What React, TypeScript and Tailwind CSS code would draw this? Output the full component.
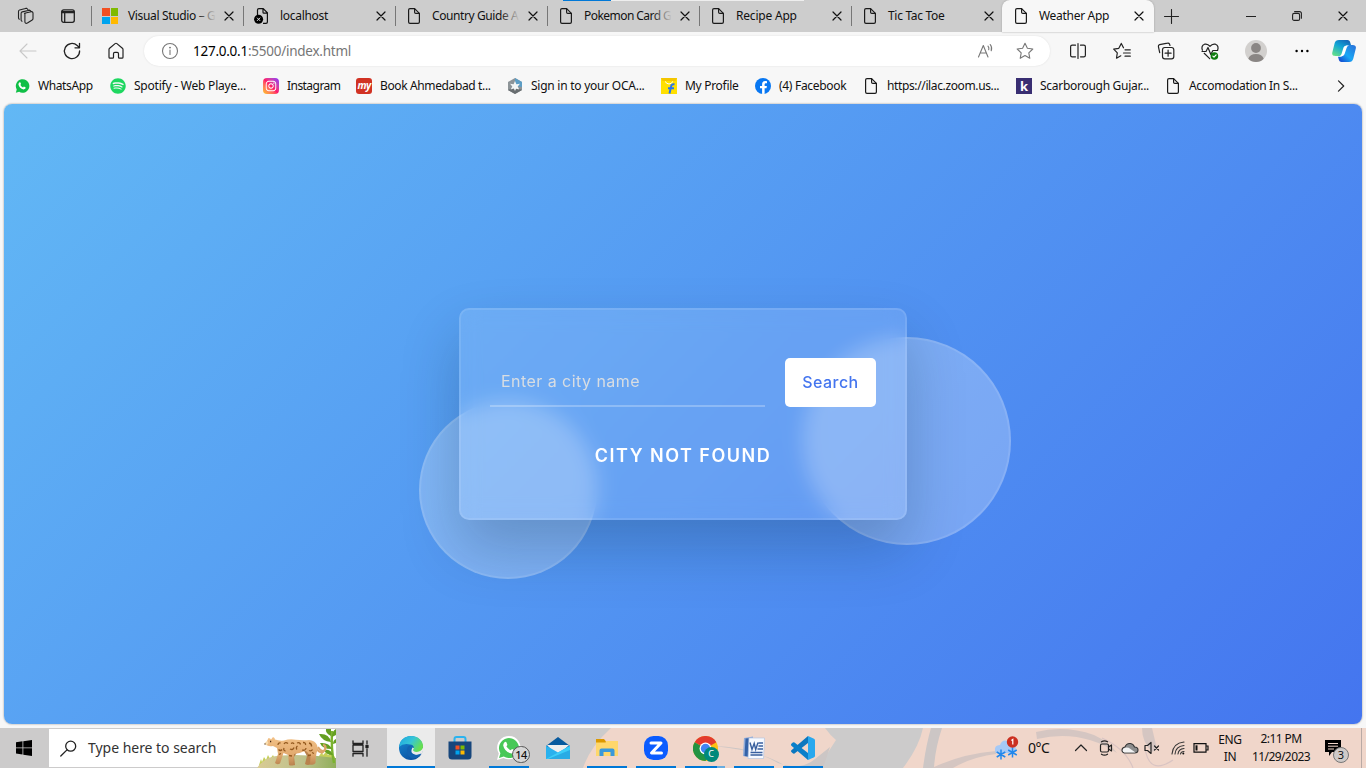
import React from "react";
import { FaWhatsapp, FaSpotify, FaInstagram, FaFacebookF } from "react-icons/fa";

type Kids = { children?: React.ReactNode };

const Line = ({ children, size = 20, w = 1.2, box = "0 0 20 20", color = "#222" }: Kids & { size?: number; w?: number; box?: string; color?: string }) => (
  <svg width={size} height={size} viewBox={box} fill="none" stroke={color} strokeWidth={w} strokeLinecap="round" strokeLinejoin="round" className="shrink-0">
    {children}
  </svg>
);

const Page = () => (
  <Line size={16} box="0 0 16 16" w={1.2} color="#1a1a1a">
    <path d="M2.6 2a1.4 1.4 0 0 1 1.4-1.4h4.6l4.8 4.8v8.6a1.4 1.4 0 0 1-1.4 1.4H4a1.4 1.4 0 0 1-1.4-1.4z" />
    <path d="M8.6.8v3.4a1.2 1.2 0 0 0 1.2 1.2h3.4" />
  </Line>
);

const Microsoft = () => (
  <div className="grid size-4 shrink-0 grid-cols-2 gap-px">
    <i className="bg-[#f25022]" />
    <i className="bg-[#7fba00]" />
    <i className="bg-[#00a4ef]" />
    <i className="bg-[#ffb900]" />
  </div>
);

const BadPage = () => (
  <svg width="16" height="16" viewBox="0 0 16 16" fill="none" className="shrink-0">
    <path d="M3.5 7V2A1.4 1.4 0 0 1 4.9.6h4.3l4.2 4.2V14a1.4 1.4 0 0 1-1.4 1.4H9M9 .8v3.4q0 .9.9.9h3.3" stroke="#111" strokeWidth="1.2" />
    <circle cx="4.6" cy="11.3" r="4.5" fill="#000" />
    <path d="M3 9.7l3.2 3.2M6.2 9.7L3 12.9" stroke="#ddd" />
  </svg>
);

const Close = () => (
  <Line size={10} box="0 0 10 10" w={1.2} color="#111">
    <path d="M1 1l8 8M9 1L1 9" />
  </Line>
);

const tabs = [
  { t: "Visual Studio – G", fade: true, icon: <Microsoft />, k: "tracking-[-0.35px]" },
  { t: "localhost", icon: <BadPage />, k: "tracking-[-0.3px]" },
  { t: "Country Guide A", fade: true, icon: <Page />, k: "tracking-[-0.4px]" },
  { t: "Pokemon Card G", fade: true, icon: <Page />, k: "tracking-[-0.55px]" },
  { t: "Recipe App", icon: <Page />, k: "tracking-[-0.2px]" },
  { t: "Tic Tac Toe", icon: <Page />, k: "tracking-[-0.3px]" },
];

function TabStrip() {
  return (
    <div className="relative flex h-8 shrink-0 items-stretch bg-[#cdcdcd]">
      <i className="absolute left-[563px] top-0 h-px w-12 bg-[#0078d7]" />
      <i className="absolute left-[611px] top-0 h-px w-[193px] bg-[#eeeeee]" />
      <div className="flex w-[91px] items-center pl-[17px]">
        <Line size={18} box="0 0 18 18" w={1.1}>
          <path d="M7.5 6.3l6.6-1.6q1.6-.3 1.9 1.2v5.7q0 1-.8 1.4l-4.8 3q-1.9 1-2.5-.8V7.5q-.3-1.1.6-1.3M5 14.3q-.9-.4-.9-1.3V6.4q0-1.2 1.1-1.5l7.3-1.7M2.3 12.2q-.8-.4-.8-1.4V4.5q0-1.2 1.1-1.5l6.8-1.7M13.9 4.8q0-2-2.6-1.4M11 3q-.4-2-2.6-1.5" />
        </Line>
        <div className="ml-[26px]">
          <Line size={14} box="0 0 14 14" w={1.3}>
            <rect x=".7" y=".9" width="12.6" height="12.4" rx="2" />
            <path d="M1 2.700h12M1 3.600h12M3.700 4v9" />
          </Line>
        </div>
      </div>
      {tabs.map((x) => (
        <div key={x.t} className="flex w-[152px] items-center">
          <i className="h-5 w-px bg-[#777]" />
          <div className="ml-[10px] flex">{x.icon}</div>
          <div className={"relative ml-[10px] w-[88px] whitespace-nowrap text-[12px] leading-4 " + x.k}>
            {x.t}
            {x.fade && <i className="absolute right-0 top-0 h-4 w-5 bg-gradient-to-r from-[#cdcdcd00] to-[#cdcdcd]" />}
          </div>
          <div className="ml-[8px]">
            <Close />
          </div>
        </div>
      ))}
      <div className="-ml-px flex w-[152px] items-center rounded-t-lg bg-[#f7f7f7] shadow-[0_0_2px_#999]">
        <div className="ml-[11px] flex">
          <Page />
        </div>
        <span className="ml-[10px] w-[88px] text-[12px] leading-4 tracking-[-0.3px]">Weather App</span>
        <div className="ml-[7px]">
          <Close />
        </div>
      </div>
      <div className="flex w-[35px] items-center justify-center">
        <Line size={15} box="0 0 15 15" w={1.1}>
          <path d="M7.5 .5v14M.5 7.5h14" />
        </Line>
      </div>
      <div className="ml-[39px] flex items-center">
        <div className="flex w-[46px] justify-center">
          <Line size={10} box="0 0 10 10" w={1}>
            <path d="M0 5.5h10" />
          </Line>
        </div>
        <div className="flex w-[46px] justify-center">
          <Line size={10} box="0 0 10 10" w={1.1}>
            <rect x=".6" y="2.4" width="7" height="7" rx="1.5" />
            <path d="M2.6.6h4.8q2 0 2 2v4.700" />
          </Line>
        </div>
        <div className="flex w-[46px] justify-center">
          <Close />
        </div>
      </div>
    </div>
  );
}

const Cell = ({ children, w = "w-11" }: Kids & { w?: string }) => <div className={"flex shrink-0 items-center justify-center " + w}>{children}</div>;

function Toolbar() {
  return (
    <div className="flex h-[38px] shrink-0 items-center pl-[6px]">
      <Cell>
        <Line color="#c8c8c8" w={1.1}>
          <path d="M18 10H2.5M9 3l-7 7 7 7" />
        </Line>
      </Cell>
      <Cell>
        <Line w={1.3}>
          <path d="M17.6 10a7.600 7.600 0 1 1-2.400-5.500L17.400 6.600M17.500 2.300v4.500H13" />
        </Line>
      </Cell>
      <Cell>
        <Line w={1.2}>
          <path d="M3 8.6q0-.8.6-1.300l5.500-4.700q.9-.7 1.800 0l5.500 4.700q.6.5.6 1.300v7.600q0 1-1 1h-2.600q-.9 0-.9-1v-3.400q0-1.400-1.300-1.400H8.800q-1.300 0-1.300 1.400v3.400q0 1-.9 1H4q-1 0-1-1z" />
        </Line>
      </Cell>
      <div className="ml-[6px] flex h-[30px] w-[906px] items-center rounded-full bg-white shadow-[0_0_2px_#ddd]">
        <div className="ml-[17px]">
          <Line size={18} box="0 0 18 18" color="#777" w={1.1}>
            <circle cx="9" cy="9" r="7.5" />
            <path d="M9 8v4.500" />
            <circle cx="9" cy="5.600" r=".4" fill="#777" />
          </Line>
        </div>
        <span className="ml-[14px] whitespace-nowrap text-[13.5px] tracking-[-0.25px] text-[#767676]">
          <span className="text-black">127.0.0.1</span>:5500/index.html
        </span>
        <div className="ml-auto mr-[21px]">
          <Line size={18} box="0 0 18 18" color="#777" w={1.1}>
            <path d="M1.500 15L6.300 3.500 11 15M3.200 11h6.200M11 4.200q1.400 1.600.7 3.600M13.200 2.500q2.300 2.800 1 6.300" />
          </Line>
        </div>
        <div className="mr-[16px]">
          <Line size={18} box="0 0 18 18" color="#777" w={1.1}>
            <path d="M9 1.300l2.400 5 5.400.7-4 3.800 1 5.500L9 13.600l-4.800 2.700 1-5.500-4-3.800 5.400-.7z" />
          </Line>
        </div>
      </div>
      <div className="ml-[6px] flex">
        <Cell>
          <Line>
            <path d="M7.500 4.200H4.200q-1.600 0-1.600 1.600v8.400q0 1.600 1.600 1.600h3.300M12.500 4.200h3.300q1.600 0 1.600 1.600v8.400q0 1.600-1.600 1.600h-3.300M10 2.500v15" />
          </Line>
        </Cell>
        <Cell>
          <Line>
            <path d="M11.500 6.800L9.300 2.400 6.800 7.300l-5.100.9 3.600 3.700-.8 5.300 4.300-2.400M13 8.800h5.300M11.500 12h6.800M13 15.200h5.300" />
          </Line>
        </Cell>
        <Cell>
          <Line>
            <rect x="6.500" y="6.500" width="11.300" height="11.300" rx="2.300" />
            <path d="M12.100 9.200v6M9.100 12.200h6M14 4.500l-.5-1.400q-.6-1.300-2-1L3.600 3.600q-1.500.4-1.200 2l1.300 6" />
          </Line>
        </Cell>
        <Cell>
          <Line>
            <path d="M2.400 9.300Q.8 4.500 4.600 3.200 7.700 2.400 10 5.300q2.300-2.900 5.400-2.100 3.800 1.300 2.200 6.100M4.200 12.300l5.500 5.300M2 10.500h4l2-4 2.800 7 2.100-4h4.700" />
            <circle cx="14.400" cy="15" r="3.800" fill="#107c10" stroke="none" />
            <path d="M12.900 15.100l1.100 1 2.100-2.200" stroke="#fff" />
          </Line>
        </Cell>
        <Cell w="w-12">
          <svg width="22" height="22" viewBox="0 0 22 22">
            <circle cx="11" cy="11" r="11" fill="#d2d0ce" />
            <circle cx="11" cy="8" r="4.900" fill="#8a8684" />
            <path d="M3.300 18.800q1.500-4.700 7.700-4.700t7.700 4.700Q15.600 22 11 22T3.300 18.800" fill="#8a8684" />
          </svg>
        </Cell>
        <Cell>
          <svg width="16" height="4" viewBox="0 0 16 4">
            <circle cx="2.600" cy="2" r="1.200" />
            <circle cx="8" cy="2" r="1.200" />
            <circle cx="13.400" cy="2" r="1.200" />
          </svg>
        </Cell>
        <Cell w="w-10">
          <svg width="24" height="24" viewBox="0 0 24 24">
            <defs>
              <linearGradient id="cpa" x1=".8" y1="0" x2=".2" y2="1">
                <stop stopColor="#1565b8" />
                <stop offset=".45" stopColor="#10a5d6" />
                <stop offset="1" stopColor="#62dd8b" />
              </linearGradient>
              <linearGradient id="cpb" x1="1" y1="0" x2="0" y2="1">
                <stop stopColor="#2a6fd8" />
                <stop offset=".55" stopColor="#19a7f5" />
                <stop offset="1" stopColor="#1238c8" />
              </linearGradient>
            </defs>
            <path d="M7 1h8.500q2 0 2.500 1.800l1 3.200h-2.500q-2.500 0-3.200 2L11 15q-.7 2-3 2H3.500q-4 0-3.200-3.600L2.700 4Q3.500 1 7 1z" fill="url(#cpa)" />
            <path d="M17 23H9.500q-2 0-2.500-1.800L6 17.700h2.500q2 0 2.700-2L13.600 8q.700-2 3-2h4q4 0 3.200 3.600l-2.500 9.900Q20.500 23 17 23z" fill="url(#cpb)" />
            <path d="M14.800 6.500q-2.600 0-3.300 2L9.500 15q-.6 2-2.300 2.300h2q2.600 0 3.300-2l2.200-6.600q.5-1.800 2.300-2.200z" fill="#fff" />
          </svg>
        </Cell>
      </div>
    </div>
  );
}

const marks = [
  {
    t: "WhatsApp",
    w: "w-[96px]",
    k: "tracking-[-0.4px]",
    i: (
      <svg width="16" height="16" viewBox="0 0 26 26">
        <path d="M3 24l1.400-5.500a11 11 0 1 1 4 4z" fill="#10bf47" />
        <path d="M8.500 7.200q1.500-1 2 .3l.8 2q.2.700-.9 1.800 1.500 2.800 4.300 4l1.300-1.400 2.700 1.300q.8 3-3.200 3.300Q8.700 17 7.200 10.500q0-2 1.300-3.300z" fill="#fff" />
      </svg>
    ),
  },
  { t: "Spotify - Web Playe...", w: "w-[153px]", k: "tracking-[-0.22px]", i: <FaSpotify size={16} color="#1ed760" /> },
  {
    t: "Instagram",
    w: "w-[93px]",
    k: "tracking-[-0.55px]",
    i: (
      <div className="flex size-4 items-center justify-center rounded bg-gradient-to-tr from-[#ffc400] via-[#ff1668] to-[#8a20ff] text-white">
        <FaInstagram size={12} />
      </div>
    ),
  },
  {
    t: "Book Ahmedabad t...",
    w: "w-[151px]",
    k: "tracking-[-0.37px]",
    i: <div className="flex size-4 items-center justify-center rounded-[3px] bg-[#d13223] pb-0.5 text-[10px] font-bold italic leading-3 tracking-[-0.5px] text-white">my</div>,
  },
  {
    t: "Sign in to your OCA...",
    w: "w-[154px]",
    k: "tracking-[-0.25px]",
    i: (
      <svg width="16" height="16" viewBox="0 0 16 16">
        <path d="M8 0l7 4v8l-7 4-7-4V4z" fill="#8d9498" />
        <path d="M8 0l7 4v5L8 8z" fill="#5c9dc5" />
        <path d="M1 12l7-3 7 3-7 4z" fill="#686d70" />
        <path d="M8 3l1.400 3.300L13 5.800 10.700 8.500l1.600 3-3.200-.8L8 13l-1.200-2.400-3.200.8 1.700-2.900L3 5.800l3.600.5z" fill="#f3f5f5" />
      </svg>
    ),
  },
  {
    t: "My Profile",
    w: "w-[94px]",
    k: "tracking-[-0.3px]",
    i: (
      <svg width="16" height="16" viewBox="0 0 16 16">
        <path d="M0 0h16v16H0z" fill="#ffe000" />
        <path d="M0 0h16l-1.500 3h-13z" fill="#f4c500" />
        <path d="M4 3.500q4 5 8 0" stroke="#fff" fill="none" />
        <path d="M13.500 6.500q-3-1-3.500 2.200L8.500 15.500M7 10.200h6" stroke="#2874f0" strokeWidth="2" fill="none" />
      </svg>
    ),
  },
  {
    t: "(4) Facebook",
    w: "w-[108px]",
    k: "tracking-[-0.3px]",
    i: (
      <div className="flex size-4 items-end justify-center overflow-hidden rounded-full bg-[#0877f2] text-white">
        <FaFacebookF size={13} />
      </div>
    ),
  },
  { t: "https://ilac.zoom.us...", w: "w-[153px]", k: "tracking-[-0.37px]", i: <Page /> },
  {
    t: "Scarborough Gujar...",
    w: "w-[149px]",
    k: "tracking-[-0.28px]",
    i: <div className="flex size-4 items-center justify-center bg-[#392e72] text-[13px] font-bold leading-4 text-white">k</div>,
  },
  { t: "Accomodation In S...", w: "w-[150px]", k: "tracking-[-0.32px]", i: <Page /> },
];

function Bookmarks() {
  return (
    <div className="flex h-[34px] shrink-0 items-center pb-[2px] pl-[14px]">
      {marks.map((m) => (
        <div key={m.t} className={"flex shrink-0 items-center gap-2 whitespace-nowrap text-[12px] leading-4 " + m.w}>
          <div className="flex size-4 shrink-0 items-center">{m.i}</div>
          <span className={m.k}>{m.t}</span>
        </div>
      ))}
      <div className="ml-[20px]">
        <Line size={12} box="0 0 12 12">
          <path d="M3.500.8L8.700 6l-5.200 5.200" />
        </Line>
      </div>
    </div>
  );
}

function Weather() {
  return (
    <main className="relative mx-1 flex h-[620px] shrink-0 items-center justify-center overflow-hidden rounded-lg bg-[linear-gradient(135deg,#62b8f5,#4475ef)] font-['Inter',sans-serif] shadow-[0_0_2px_#888]">
      <i className="absolute left-[799px] top-[233px] size-52 rounded-full border-2 border-white/10 bg-white/25" />
      <i className="absolute left-[415px] top-[297px] size-[178px] rounded-full border-2 border-white/10 bg-white/25" />
      <section className="relative flex h-[212px] w-[448px] flex-col rounded-[10px] border-2 border-white/10 bg-white/[0.12] px-[29px] pt-12 shadow-[0_29px_59px_rgba(10,35,50,0.23)] backdrop-blur-[10px]">
        <div className="flex gap-5">
          <div className="flex h-[49px] w-[275px] items-center border-b-2 border-white/25 pb-px pl-[11px] text-[16px] tracking-[0.45px] text-[#d8dde2]">Enter a city name</div>
          <button className="h-[49px] w-[91px] rounded-[5px] bg-white pb-[2px] text-[16px] font-medium tracking-[0.45px] text-[#4475ef]">Search</button>
        </div>
        <h2 className="mt-[35px] text-center text-[18px] font-semibold uppercase leading-[27px] tracking-[1.5px] text-white">City not found</h2>
      </section>
    </main>
  );
}

const Edge = () => (
  <svg width="26" height="26" viewBox="0 0 26 26">
    <defs>
      <linearGradient id="e1" x1="0" y1="0" x2="1" y2=".5">
        <stop stopColor="#1ca5e2" />
        <stop offset=".55" stopColor="#36c5d6" />
        <stop offset="1" stopColor="#67df50" />
      </linearGradient>
      <linearGradient id="e2" x1="0" y1="0" x2=".6" y2="1">
        <stop stopColor="#168bd5" />
        <stop offset="1" stopColor="#0b50a0" />
      </linearGradient>
    </defs>
    <circle cx="13" cy="13" r="12" fill="url(#e2)" />
    <path d="M14.500 12.500q-3.500 6.500 4 7.500 3 .2 5.500-1.200l3-9-5 6z" fill="#ebebeb" />
    <path d="M1 12Q2 3 10.500 1.200 20-.3 24 7q3 7-2.500 9.300-3.500 1.300-6-.3-1-.9.2-2.200.8-3.800-3.700-4.300Q5 8 1 12z" fill="url(#e1)" />
    <path d="M9 15q0 6 5 8.500 6 .5 9.500-5-8 3.500-11.500-1.500-1.800-3.800 1-6Q9.500 10 9 15z" fill="#1262b0" />
  </svg>
);
const Store = () => (
  <svg width="24" height="24" viewBox="0 0 24 24">
    <path d="M6.500 6V3q0-2 2-2h7q2 0 2 2v3" fill="none" stroke="#2bb3ef" strokeWidth="2" />
    <path d="M.500 5.500h23V20q0 3.500-3.500 3.500H4Q.5 23.500.5 20z" fill="#17467c" />
    <path d="M7.500 9.500h4v4h-4z" fill="#f25022" />
    <path d="M12.500 9.500h4v4h-4z" fill="#7fba00" />
    <path d="M7.500 14.500h4v4h-4z" fill="#00a4ef" />
    <path d="M12.500 14.500h4v4h-4z" fill="#ffb900" />
  </svg>
);
const Whats = () => (
  <div className="relative">
    <svg width="26" height="26" viewBox="0 0 26 26">
      <path d="M1 25l1.800-6.400A11.700 11.700 0 1 1 7.500 23z" fill="#fff" />
      <path d="M3 23l1.400-4.800a10 10 0 1 1 3.400 3.400z" fill="#48c857" />
      <path d="M8.500 7.200q1.500-1 2 .3l.8 2q.2.700-.9 1.800 1.500 2.800 4.300 4l1.300-1.400 2.700 1.300q.8 3-3.200 3.300Q8.700 17 7.200 10.500q0-2 1.300-3.300z" fill="#fff" />
    </svg>
    <span className="absolute left-[16px] top-[11px] flex h-[17px] w-[18px] items-center justify-center rounded-full border border-[#555] bg-[#d6d6d6] text-[11px] font-medium leading-none tracking-[-0.5px]">14</span>
  </div>
);
const Mail = () => (
  <svg width="24" height="24" viewBox="0 0 24 24">
    <path d="M0 10L12 1l12 9v3H0z" fill="#075a9e" />
    <path d="M1 9h22l-9 9H9z" fill="#eee" />
    <path d="M0 9.500l12 7 12-7V23H0z" fill="#29b1ee" />
    <path d="M0 23l24-13v13z" fill="#3ccdf8" />
    <path d="M2 23l22-9v9z" fill="#1689d2" opacity=".5" />
  </svg>
);
const Folder = () => (
  <svg width="22" height="20" viewBox="0 0 22 20">
    <path d="M0 1h8l2 2.500V7H0z" fill="#dc9900" />
    <path d="M0 4.500h9.500l1-1.500H22v15H0z" fill="#ffd76b" />
    <path d="M3.500 18v-5.500q0-2 2-2h11q2 0 2 2V18h-4v-4h-7v4z" fill="#3999db" />
  </svg>
);
const Zoom = () => (
  <svg width="24" height="24" viewBox="0 0 24 24">
    <rect width="24" height="24" rx="9.500" fill="#0b5cff" />
    <path d="M7 7h10L7.500 17h10" fill="none" stroke="#fff" strokeWidth="3" strokeLinejoin="round" strokeLinecap="round" />
  </svg>
);
const Chrome = () => (
  <div className="relative">
    <svg width="25" height="25" viewBox="0 0 24 24">
      <circle cx="12" cy="12" r="12" fill="#fbc116" />
      <path d="M12 12L1.600 6A12 12 0 0 1 22.400 6z" fill="#e33b2e" />
      <path d="M1.600 6A12 12 0 0 0 12 24l5-9-5-3z" fill="#229342" />
      <circle cx="12" cy="12" r="5.700" fill="#fff" />
      <circle cx="12" cy="12" r="4.500" fill="#4285f4" />
    </svg>
    <span className="absolute left-[11px] top-[11px] flex size-[15px] items-center justify-center rounded-full bg-[#00897b] text-[9px] text-white">C</span>
  </div>
);
const Word = () => (
  <svg width="24" height="24" viewBox="0 0 24 24">
    <path d="M2 2l9-1.500V22L1 20z" fill="#8fabd9" />
    <path d="M3.500 2.500l6-.5v19l-7-1z" fill="#3563a8" />
    <path d="M7 2h15.500l-1 20.500H6z" fill="#f6f9ff" stroke="#b4c4df" strokeWidth=".7" />
    <path d="M8 6.500l2 7 2.200-6 1.500 6 2.300-7M16.500 7H21M16.500 10H21M15.500 13H21M8.500 16.500h12M8.500 19h12" fill="none" stroke="#385f9f" strokeWidth="1.400" />
  </svg>
);
const Code = () => (
  <svg width="24" height="24" viewBox="0 0 24 24">
    <path d="M17 0v7L3.500 17.500Q2.500 18 1.800 17.200L.4 16q-.8-1 0-1.800z" fill="#0b77bf" />
    <path d="M.4 7.800L1.800 6.500q.8-.6 1.700 0L17 17v7L.4 9.700q-.8-.9 0-1.900z" fill="#087fca" />
    <path d="M17 0l6 2.700q1 .5 1 1.500v15.600q0 1-1 1.500L17 24z" fill="#29a8ee" />
  </svg>
);

const apps = [
  { i: <Edge />, bar: "w-12", bg: "bg-[#ebebeb]" },
  { i: <Store />, bar: "w-0", bg: "" },
  { i: <Whats />, bar: "w-10", bg: "" },
  { i: <Mail />, bar: "w-0", bg: "" },
  { i: <Folder />, bar: "w-10", bg: "" },
  { i: <Zoom />, bar: "w-10", bg: "" },
  { i: <Chrome />, bar: "w-10 border-r-8 border-[#68ace0]", bg: "" },
  { i: <Word />, bar: "w-10", bg: "" },
  { i: <Code />, bar: "w-10", bg: "" },
];

const Leopard = () => (
  <svg width="79" height="39" viewBox="0 0 79 39">
    <defs>
      <linearGradient id="hill" x1="0" y1="0" x2="1" y2="0">
        <stop stopColor="#d9cb95" />
        <stop offset=".6" stopColor="#bcc08a" />
        <stop offset="1" stopColor="#8fae5a" />
      </linearGradient>
      <linearGradient id="fur" x1="0" y1="0" x2="0" y2="1">
        <stop stopColor="#f2c187" />
        <stop offset=".6" stopColor="#e3ab70" />
        <stop offset="1" stopColor="#b9834f" />
      </linearGradient>
    </defs>
    <path d="M2 36l2-6 1 3 2-5 2 3 2-5 2 4 3-4 2 4 4-1-2 8zM62 27l3-4 1 3 3-3 2 3 3-2 4 4v6H62z" fill="#c5cf5a" />
    <path d="M0 39Q8 27 24 26.500 50 25 79 29v10z" fill="url(#hill)" />
    <path d="M77 34Q74 20 75 2" fill="none" stroke="#7bb32e" strokeWidth="2.400" />
    <path d="M74 13q-9-1-12-8 10-1 12 8zM75 20q-10 0-12-6 9-1 12 6zM74 7q-6-3-5-7h5zM75 8q0-6 4-8v6zM76 26q-7 0-9-5 7-1 9 5zM76 15q0-4 3-5v4z" fill="#659f22" />
    <path d="M61 18q4 6 7 3 2-5-2-5M58 17q4 8 8 6 4-3 1-7" fill="none" stroke="#dca468" strokeWidth="2" />
    <path d="M26 20l6 6 1 9q2 2 5 1l-1-8 4-6zM46 20l4 7-2 8q3 2 6 0l2-9z" fill="#b9814c" />
    <path d="M10 12l1.500-3q2 0 2.500 1.500l2-2.500q2 .5 2 2.500 4 1.500 9 1 6-2 12-.7 7 .7 13 .2 6 .5 8 5 1.500 4-.5 8-.8 4-1 10-1.500 2.500-5.500 1.500l.5-8-4.500-6q-6 3-12 3.500L36.500 36q-2.500 1-4.500 0l-.8-10-4.700-2-3.500 10.500q-3 1.500-5-.5l3-9-1-6-4-2q-5 1-7-1.500z" fill="url(#fur)" />
    <path d="M7.500 14.500q1-2 3-2.500l1 2-2 2.500z" fill="#f7dcae" />
    <g fill="none" stroke="#94591f" strokeWidth="1.300">
      <path d="M21 16q0-2.500 2.500-2M21.500 20.500q2 2 3.500 0M27 15q1.500-2.500 4-.5M27 19q-1 2.500 1.500 3M34 14.500q2-1.500 3 .5M33 20q3 1.500 4-1.500M40 14q3-1 3.500 1.500M40 20.500q-1.500-2 .5-3.500M46 13.500q3 0 2.500 2.500M45 21q3.500 1 4-2M52 14q3 .5 2.500 3.500M52 21.500q2.500 1 3.500-1M51 26.500l3-.5M55 23.500l2 1M22 25.500l2-1M32 26.500l3 .5" />
    </g>
    <path d="M13 12.500h1.200M8 14.500v1" stroke="#442510" strokeWidth="1.300" />
  </svg>
);

const Wallpaper = () => (
  <svg width="1366" height="40" viewBox="0 728 1366 40" className="absolute inset-0">
    <path d="M0 728h1366v40H0z" fill="#cccbcb" />
    <path d="M611 728h214q5 7 11 12l-18 28H583q7-21 28-40zM923 728h443v40H903q16-21 20-40z" fill="#f0d6ca" />
    <path d="M713 746q35 0 65 17 23 8 37-4l15-12-7 21h-35q-22-17-75-22zM931 728h11q-7 21-8 40h-11q3-23 8-40z" fill="#ccc6c5" />
    <path d="M932 768q29-14 64-17v3q-24 3-43 14zM1036 732q29-7 58 3 15 7 23 18-36-24-80-14zM1142 728q0 14 10 24l5-3-5-21z" fill="#d5c6c2" />
    <path d="M1102 738q24 11 31 30M1145 748q4 28 28 12" fill="none" stroke="#d9c4c3" strokeWidth="1.200" />
    <path d="M1361.500 728v40" stroke="#b9aaa5" />
  </svg>
);

function Tray() {
  return (
    <div className="ml-auto flex h-full items-center">
      <svg width="26" height="24" viewBox="0 0 26 24" className="mr-[7px]">
        <path d="M1 15q-1-6 5-6 2-6 8-4 8-1 8 10-1 2-4 2H3q-2 0-2-2z" fill="#a5c9f6" />
        <path d="M7 13.500v10M2.700 16l8.600 5M11.300 16l-8.600 5M18.500 11.500v10M14.200 14l8.600 5M22.800 14l-8.600 5" stroke="#2288ec" strokeWidth="1.500" />
        <circle cx="18.500" cy="6" r="5.700" fill="#cb2f20" />
        <path d="M17.400 4.500l1.400-1v5" stroke="#fff" fill="none" strokeWidth="1.200" />
      </svg>
      <span className="ml-px w-[46px] text-[14px] leading-5 tracking-[-0.5px]">0°C</span>
      <Line size={14} box="0 0 14 14">
        <path d="M1.500 9.500L7 4l5.500 5.500" />
      </Line>
      <div className="ml-[10px] flex w-3.5">
        <Line size={16} box="0 0 16 16">
          <rect x="2.500" y="4" width="8" height="8" rx="1.500" />
          <path d="M10.500 7l3-2v6l-3-2M3.500 1.800q3-2 6 0M3.500 14.200q3 2 6 0" />
        </Line>
      </div>
      <svg width="18" height="14" viewBox="0 0 18 14" className="ml-[9px]">
        <path d="M3.500 12Q1 11.500 1 9t3-3Q5.500 2 9.500 2.500q3 .5 4 3.500 3.500 0 3.500 3t-3.500 3z" fill="#8c8c8c" stroke="#333" strokeWidth="1.100" />
        <path d="M3.500 11.500Q1.600 11 1.600 9.200T4 6.800q3-.8 5.500 1.200l5 3.500z" fill="#f3f3f3" />
      </svg>
      <div className="ml-[5px]">
        <Line size={16} box="0 0 16 16">
          <path d="M1 5.500h2.500L7 2.500v11l-3.500-3H1zM10.500 6l4 4M14.500 6l-4 4" />
        </Line>
      </div>
      <div className="ml-[10px]">
        <Line size={16} box="0 0 16 16" w={1.100} color="#333">
          <path d="M2 14Q3 3 14 2M5 14Q5.500 6.500 14 5.500M8 14q.5-5 6-5.500M10.500 14q.5-2.500 3.500-2.500" />
          <circle cx="13.300" cy="13.500" r="1" fill="#111" stroke="none" />
        </Line>
      </div>
      <svg width="16" height="10" viewBox="0 0 16 10" className="ml-[7px]">
        <path d="M1 .6h12v8.600H1zM13 3h2v4h-2" fill="none" stroke="#111" strokeWidth="1.200" />
        <path d="M2.500 2.300h2v5.200h-2z" fill="#111" />
      </svg>
      <div className="ml-[7px] w-[28px] text-center text-[12px] leading-[17px] tracking-[-0.4px]">
        ENG
        <br />
        IN
      </div>
      <div className="ml-[5px] w-[64px] text-center text-[12px] leading-[18px] tracking-[-0.6px]">
        2:11 PM
        <br />
        11/29/2023
      </div>
      <div className="relative ml-[12px] mr-[24px]">
        <svg width="17" height="18" viewBox="0 0 17 18">
          <path d="M0 1h16v12H7l-3 4v-4H0z" />
          <path d="M3 4.500h10M3 7.200h10M3 10h6" stroke="#f0d6ca" />
        </svg>
        <span className="absolute left-[8px] top-[8px] flex size-4 items-center justify-center rounded-full border border-[#777] bg-[#cfcac8] text-[11px]">3</span>
      </div>
    </div>
  );
}

function Taskbar() {
  return (
    <footer className="relative mt-1 h-10 shrink-0 overflow-hidden">
      <Wallpaper />
      <div className="relative flex h-full items-center">
        <div className="flex w-[49px] justify-center pr-px">
          <svg width="16" height="16" viewBox="0 0 16 16">
            <path d="M0 2.200l6.500-.9v6.200H0zM7.300 1.200L16 0v7.500H7.300zM0 8.300h6.500v6.200L0 13.600zM7.300 8.300H16V16l-8.700-1.300z" />
          </svg>
        </div>
        <div className="flex h-[38px] w-[287px] items-center bg-white pl-[11px]">
          <Line size={17} box="0 0 17 17" w={1.300}>
            <circle cx="10.700" cy="6.200" r="5" />
            <path d="M7 9.900L.8 16" />
          </Line>
          <span className="ml-[11px] whitespace-nowrap text-[14px] leading-5 text-[#333] tracking-[-0.03px]">Type here to search</span>
          <div className="ml-auto">
            <Leopard />
          </div>
        </div>
        <div className="flex w-[51px] justify-center pr-[3px]">
          <Line size={17} box="0 0 17 17" w={1.300}>
            <path d="M1 .8v2.700h10V.8M1 16.200v-2.700h10v2.700M1 5h10v6.500H1zM15 .8v3M15 9v7.200" />
            <path d="M14 5.500h2v2h-2z" fill="#111" />
          </Line>
        </div>
        {apps.map((a, n) => (
          <div key={n} className={"relative mr-px flex h-full w-12 items-center justify-center " + a.bg}>
            {a.i}
            <i className={"absolute bottom-0 h-0.5 bg-[#0078d7] " + a.bar} />
          </div>
        ))}
        <Tray />
      </div>
    </footer>
  );
}

export default function App() {
  return (
    <div className="flex h-[768px] w-[1366px] flex-col overflow-hidden bg-[#f7f7f7] font-['Noto_Sans',sans-serif] text-[#111]">
      <TabStrip />
      <Toolbar />
      <Bookmarks />
      <Weather />
      <Taskbar />
    </div>
  );
}
